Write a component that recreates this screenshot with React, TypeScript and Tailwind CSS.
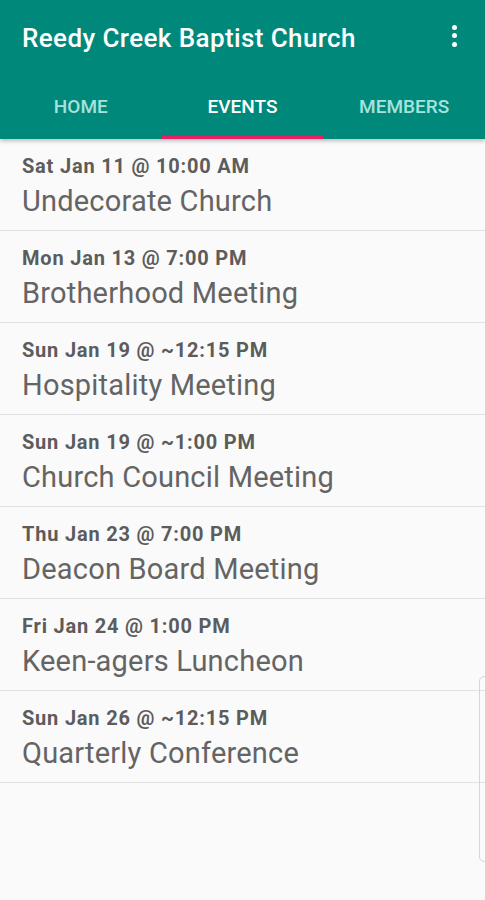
import React from "react"

type ChurchEvent = { when: string; title: string }

const events: ChurchEvent[] = [
  { when: "Sat Jan 11 @ 10:00 AM", title: "Undecorate Church" },
  { when: "Mon Jan 13 @ 7:00 PM", title: "Brotherhood Meeting" },
  { when: "Sun Jan 19 @ ~12:15 PM", title: "Hospitality Meeting" },
  { when: "Sun Jan 19 @ ~1:00 PM", title: "Church Council Meeting" },
  { when: "Thu Jan 23 @ 7:00 PM", title: "Deacon Board Meeting" },
  { when: "Fri Jan 24 @ 1:00 PM", title: "Keen-agers Luncheon" },
  { when: "Sun Jan 26 @ ~12:15 PM", title: "Quarterly Conference" },
]

const tabs = ["HOME", "EVENTS", "MEMBERS"]

export default function App() {
  return (
    <div className="relative min-h-[900px] w-[485px] overflow-hidden bg-[#fafafa] font-['Roboto',sans-serif]">
      {/* App bar */}
      <div className="bg-[#00897b] shadow-[0_2px_4px_rgba(0,0,0,0.25)]">
        <div className="flex h-[76px] items-center justify-between pl-[22px] pr-[28px]">
          <h1 className="text-[26px] font-medium leading-[30px] tracking-[0.4px] text-white">
            Reedy Creek Baptist Church
          </h1>
          <div className="mb-[5px] flex flex-col items-center gap-[3.5px]">
            <span className="h-[5px] w-[5px] rounded-full bg-white" />
            <span className="h-[5px] w-[5px] rounded-full bg-white" />
            <span className="h-[5px] w-[5px] rounded-full bg-white" />
          </div>
        </div>
        <div className="grid h-[63px] grid-cols-3">
          {tabs.map((tab) => (
            <div
              key={tab}
              className={
                tab === "EVENTS"
                  ? "flex items-center justify-center border-b-[3px] border-[#e91e63] pt-[3px] text-[19px] font-medium text-white"
                  : "flex items-center justify-center border-b-[3px] border-transparent pt-[3px] text-[19px] font-medium text-[#a6e3dc]"
              }
            >
              {tab}
            </div>
          ))}
        </div>
      </div>

      {/* Events list */}
      <div className="flex flex-col">
        {events.map((ev) => (
          <div key={ev.when + ev.title} className="h-[92px] border-b border-[#e2e2e2] pl-[22px] pt-[15px]">
            <p className="text-[20px] font-bold leading-[24px] tracking-[0.8px] text-[#5c5c5c]">{ev.when}</p>
            <p className="mt-[6px] text-[29px] leading-[34px] tracking-[0.2px] text-[#646464]">{ev.title}</p>
          </div>
        ))}
      </div>

      {/* edge handle */}
      <div className="absolute right-[-6px] top-[676px] h-[186px] w-[12px] rounded-[5px] border border-[#d6d6d6]" />
    </div>
  )
}
